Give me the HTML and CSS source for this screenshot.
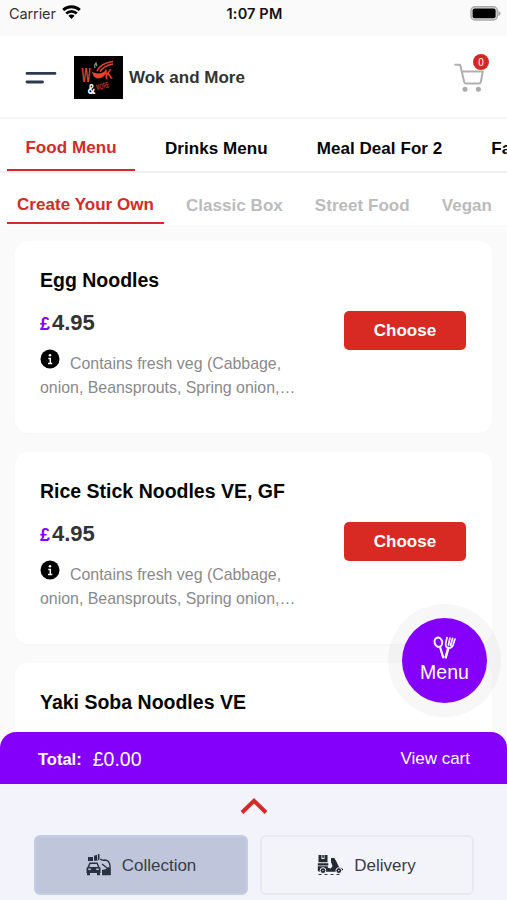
FILE: index.html
```html
<!DOCTYPE html>
<html lang="en">
<head>
<meta charset="utf-8">
<title>Wok and More</title>
<link rel="stylesheet" href="styles.css">
</head>
<body>
<div class="app">
  <div class="status">
    <div class="carrier"><span>Carrier</span>
      <svg width="19" height="14" viewBox="0 0 19 14"><g fill="none" stroke="#000" stroke-width="2.8"><path d="M1.2 5.1a12 12 0 0 1 16.6 0"/><path d="M4.2 8.5a7.6 7.6 0 0 1 10.6 0"/></g><path d="M6.4 10.8a4.4 4.4 0 0 1 6.2 0L9.5 14z"/></svg>
    </div>
    <div class="time">1:07 PM</div>
    <svg class="battery" width="32" height="15" viewBox="0 0 32 15"><rect x="1" y=".8" width="26.4" height="13.2" rx="4" fill="#ddd" stroke="#aaa" stroke-width="1.4"/><rect x="2.6" y="2.4" width="23" height="9.8" rx="2"/><path d="M28.4 4.5q4.4 2.9 0 5.8z" fill="#aaa"/></svg>
  </div>
  <header class="header">
    <svg width="32" height="14" viewBox="0 0 32 14" stroke="#2c3a4f" stroke-width="2.8" stroke-linecap="round"><path d="M2 2.4h28M2 11h15.5"/></svg>
    <svg class="logo" width="49" height="43" viewBox="0 0 49 43">
      <rect width="49" height="43"/>
      <g fill="#e8432c" font-family="Liberation Sans, sans-serif" font-weight="bold">
        <text x="7.5" y="26" font-size="21" textLength="9" lengthAdjust="spacingAndGlyphs">W</text>
        <text x="31" y="23.2" font-size="14" textLength="7.5" lengthAdjust="spacingAndGlyphs" transform="rotate(-5 31 23.2)">K</text>
        <text x="23" y="34.5" font-size="8.5" textLength="13" lengthAdjust="spacingAndGlyphs" transform="rotate(-14 23 34.5)" fill="#b73225">MORE</text>
      </g>
      <path d="M18 16q2 9 10 5.500q4-2 4-7q-6 5-14 1.500z" fill="#e8432c"/>
      <path d="M23 15q4-8 16-9.500M26 15.500q4-6 13-7.500" fill="none" stroke="#e8432c" stroke-width="1.500"/>
      <path d="M21 12q-1-3 1-5l1 3" fill="none" stroke="#8b929b" stroke-width="1.200"/>
      <text x="13.5" y="37.5" font-size="15" font-weight="bold" font-family="Liberation Sans, sans-serif" fill="#fff" textLength="8" lengthAdjust="spacingAndGlyphs">&amp;</text>
    </svg>
    <h1>Wok and More</h1>
    <div class="cart">
      <svg width="31" height="30" viewBox="0 0 31 30"><path d="M1.2 1.8h5l4 17.2q.5 1.600 2 1.600h12.600q1.600 0 2-1.600l2-10.500H8" fill="none" stroke="#b0b0b0" stroke-width="2" stroke-linecap="round" stroke-linejoin="round"/><circle cx="11" cy="26.3" r="2.5" fill="#aaa"/><circle cx="24.4" cy="26.3" r="2.5" fill="#aaa"/></svg>
      <span class="badge">0</span>
    </div>
  </header>
  <nav class="tabs">
    <a class="active">Food Menu</a><a>Drinks Menu</a><a>Meal Deal For 2</a><a>Family Meal</a>
  </nav>
  <nav class="subtabs">
    <a class="active">Create Your Own</a><a>Classic Box</a><a>Street Food</a><a>Vegan</a>
  </nav>
  <main class="list">
    <article class="card">
      <div class="info">
        <h2>Egg Noodles</h2>
        <div class="price"><span>£</span>4.95</div>
        <p><svg width="20" height="20" viewBox="0 0 20 20"><circle cx="10" cy="10" r="9.5"/><path d="M8.3 9.5h2v5M8 14.500h4.300" fill="none" stroke="#fff" stroke-width="1.500"/><circle cx="10" cy="6.2" r="1.3" fill="#fff"/></svg>Contains fresh veg (Cabbage,<br>onion, Beansprouts, Spring onion,…</p>
      </div>
      <button>Choose</button>
    </article>
    <article class="card">
      <div class="info">
        <h2>Rice Stick Noodles VE, GF</h2>
        <div class="price"><span>£</span>4.95</div>
        <p><svg width="20" height="20" viewBox="0 0 20 20"><circle cx="10" cy="10" r="9.5"/><path d="M8.3 9.5h2v5M8 14.500h4.300" fill="none" stroke="#fff" stroke-width="1.500"/><circle cx="10" cy="6.2" r="1.3" fill="#fff"/></svg>Contains fresh veg (Cabbage,<br>onion, Beansprouts, Spring onion,…</p>
      </div>
      <button>Choose</button>
    </article>
    <article class="card">
      <div class="info"><h2>Yaki Soba Noodles VE</h2></div>
    </article>
  </main>
  <div class="fab">
    <svg width="23" height="23" viewBox="0 0 23 23" fill="none" stroke="#fff" stroke-linecap="round"><ellipse cx="5.4" cy="6.2" rx="3.8" ry="4.7" stroke-width="2" transform="rotate(-15 5.4 6.2)"/><path d="M7 11l3.200 10.300" stroke-width="2.200"/><path d="M15.300 12l-2.600 9.300" stroke-width="2.600"/><path d="M14 1.500l-1.300 6q-.3 3.700 2.600 4.400 3.200.6 4.700-2.800l2-6M16.900 2l-1.400 7M19.600 2.300l-2 7" stroke-width="1.700"/></svg>
    <span>Menu</span>
  </div>
  <div class="total"><b>Total:</b><span class="amount">£0.00</span><span class="view">View cart</span></div>
  <footer class="footer">
    <svg class="chevron" width="28" height="18" viewBox="0 0 28 18"><path d="M2 15.500L14 3.800 26 15.500" fill="none" stroke="#d32b26" stroke-width="4"/></svg>
    <div class="modes">
      <div class="mode selected">
        <svg width="26" height="22" viewBox="0 0 26 22" fill="#283342"><path d="M3 3h5v4H3zM9 1.8l3-1v6H9zM13 0h1.5v5l-2 2z"/><path d="M4.5 8.5h8l2 4.5 1 1v5h-14v-5l1-1zM5.500 10l-1.300 3h8.800l-1.300-3z" fill-rule="evenodd"/><path d="M2 18h3v3.300H2zM12 18h3v3.300h-3z"/><path d="M3.300 14.600h2.500v1.400H3.300zM11.200 14.600h2.500v1.400h-2.500z" fill="#bfc6dc"/><path d="M15 5.200q2.400 1.500 4.500.8 5 0 5.500 6v9M17 10l5 4" fill="none" stroke="#283342" stroke-width="1.400"/><path d="M17 16l4-1 2-2 2.500 1v7.300H17z"/></svg>
        <span>Collection</span>
      </div>
      <div class="mode">
        <svg width="26" height="22" viewBox="0 0 26 22" fill="#222a33"><path d="M1.5 1h3v4h3V1h3v7.300h-9zM5.300 1h1.500v3H5.300zM.8 9.200h10.500v2.200H.8zM.8 12.200h10v1.600l3 .7 1.700-2.500-1.500-4V4h3.200l1.700 2.600 3.100 6.400 4 2v1.200h-5l-2.500 1.500H2.500L.8 17z"/><circle cx="6" cy="16.6" r="2.9" stroke="#f2f3fb"/><circle cx="21.800" cy="16.6" r="2.9" stroke="#f2f3fb"/><circle cx="6" cy="16.6" r=".7" fill="#f2f3fb"/><circle cx="21.800" cy="16.6" r=".7" fill="#f2f3fb"/><path d="M1.500 20.500h23" stroke="#222a33" stroke-width=".9" stroke-dasharray="3 3" fill="none"/></svg>
        <span>Delivery</span>
      </div>
    </div>
  </footer>
</div>
</body>
</html>
```
FILE: styles.css
```css
* { box-sizing: border-box; }
body { margin: 0; font-family: "Liberation Sans", Arial, sans-serif; background: #fff; }
svg { display: block; flex: none; }
h1, h2, p { margin: 0; }
.app { position: relative; width: 507px; height: 900px; display: flex; flex-direction: column; overflow: hidden; }
.status { flex: none; height: 36px; background: #fafafa; display: grid; grid-template-columns: 1fr auto 1fr; align-items: start; padding: 6px 5px 0 9px; font-family: Inter, sans-serif; font-size: 14.5px; line-height: 16px; color: #222; }
.carrier { display: flex; gap: 6px; color: #333; letter-spacing: -.1px; }
.carrier svg { margin-top: -1px; }
.time { font-weight: 600; font-size: 14.5px; color: #111; position: relative; left: -1px; letter-spacing: .15px; }
.battery { justify-self: end; }
.header { flex: none; height: 83px; border-bottom: 2px solid #f5f5f5; display: flex; align-items: center; padding: 2px 22px 0 25px; }
.logo { margin: 0 6px 0 17px; }
.header h1 { font-size: 17px; color: #333; }
.cart { position: relative; margin-left: auto; }
.badge { position: absolute; top: -9px; right: -4px; width: 16px; height: 16px; border-radius: 50%; background: #d42822; color: #fff; font-size: 10px; line-height: 17px; text-align: center; }
.tabs, .subtabs { flex: none; display: flex; font-size: 17px; font-weight: bold; white-space: nowrap; overflow: hidden; padding-left: 7px; }
.tabs { height: 54px; border-bottom: 2px solid #f0f0f0; color: #050505; letter-spacing: .06px; }
.tabs a { flex: none; padding: 20px 0 0; line-height: 20px; margin-right: 49px; }
.tabs .active { width: 128px; text-align: center; margin-right: 30px; padding-top: 19px; border-bottom: 2px solid #d32b26; color: #d32b26; }
.subtabs { height: 52px; color: #bbb; letter-spacing: .04px; }
.subtabs a { flex: none; padding-top: 23px; line-height: 20px; margin-right: 32px; }
.subtabs .active { width: 157px; height: 51px; text-align: center; margin-right: 22px; padding-top: 22px; border-bottom: 2px solid #d32b26; color: #d32b26; }
.list { flex: 1; min-height: 0; overflow: hidden; background: #fafafa; padding: 16px 15px 0; display: flex; flex-direction: column; gap: 19px; margin-bottom: -16px; }
.card { flex: none; height: 192px; background: #fff; border-radius: 13px; box-shadow: 0 1px 3px rgba(0,0,0,.02); display: flex; justify-content: space-between; padding: 27px 26px 0 25px; }
.card h2 { font-size: 19.5px; line-height: 24px; color: #050505; }
.price { font-size: 22px; line-height: 26px; font-weight: bold; color: #333; margin-top: 18px; }
.price span { font-size: 18px; color: #8500fa; margin-right: 2px; }
.card p { font-size: 15.9px; line-height: 24px; color: #89898b; margin-top: 15px; white-space: nowrap; }
.card p svg { display: inline-block; vertical-align: 0; margin: -6px 10px 0 0; }
.card button { flex: none; width: 122px; height: 39px; margin-top: 43px; border: 0; border-radius: 5px; background: #d82a22; color: #fff; font: bold 17px "Liberation Sans", sans-serif; padding: 0; }
.fab { position: absolute; left: 402px; top: 618px; width: 85px; height: 85px; border-radius: 50%; background: #8500fa; box-shadow: 0 0 0 14px rgba(0,0,0,.03); color: #fff; font-size: 19.5px; line-height: 22px; display: flex; flex-direction: column; align-items: center; padding-top: 18px; gap: 2px; }
.total { position: relative; flex: none; height: 52px; border-radius: 16px 16px 0 0; background: #8500fa; color: #fff; display: flex; align-items: center; padding: 2px 37px 0 38px; font-size: 17px; }
.total b { font-size: 16.5px; }
.amount { font-size: 19.5px; margin-left: 11px; }
.view { margin-left: auto; }
.footer { flex: none; height: 116px; background: #f2f3fb; display: flex; flex-direction: column; align-items: center; padding: 13px 33px 5px 34px; }
.modes { display: flex; gap: 12px; width: 100%; margin-top: 20px; }
.mode { flex: 1; height: 60px; border: 2px solid #e9eaf0; border-radius: 6px; background: #f3f4fa; display: flex; align-items: center; justify-content: center; gap: 11px; font-size: 17px; color: #3a3d46; }
.mode.selected { background: #bfc6dc; border-color: #c6cde0; }
.mode span { padding-top: 1px; }
.mode svg { margin-left: -1px; }
```
